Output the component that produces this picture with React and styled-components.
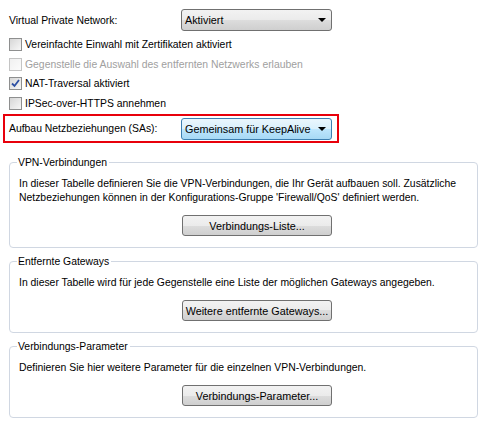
import React from "react";
import styled, { createGlobalStyle } from "styled-components";

const Global = createGlobalStyle`
  html, body { margin: 0; padding: 0; background: #fff; }
  body { font-family: "Liberation Sans", Arial, sans-serif; font-size: 10.4px; color: #000; }
`;

const Page = styled.div`
  width: 488px;
  height: 430px;
  box-sizing: border-box;
  padding: 9px 10px 0 9px;
  display: flex;
  flex-direction: column;
`;

const FieldRow = styled.div`
  display: flex;
  align-items: center;
  height: 22px;
`;

const Label = styled.span`
  width: 172px;
  flex: none;
`;

const Select = styled.div`
  width: 151px;
  height: 22px;
  box-sizing: border-box;
  border: 1px solid ${(p) => (p.$active ? "#3c7fb1" : "#707070")};
  border-radius: 3px;
  background: ${(p) =>
    p.$active
      ? "linear-gradient(#eaf6fd 0%, #d9f0fc 50%, #bee6fd 50%, #a7d9f5 100%)"
      : "linear-gradient(#f2f2f2 0%, #ebebeb 50%, #dddddd 50%, #cfcfcf 100%)"};
  display: flex;
  align-items: center;
  justify-content: space-between;
  padding: 0 5px 0 3px;
  font-size: 10.8px;
`;

const Arrow = styled.span`
  width: 0;
  height: 0;
  border-left: 4px solid transparent;
  border-right: 4px solid transparent;
  border-top: 4px solid #000;
`;

const Checks = styled.div`
  display: flex;
  flex-direction: column;
  margin-top: 4px;
`;

const CheckRow = styled.div`
  display: flex;
  align-items: center;
  height: 19.5px;
  gap: 3px;
  color: ${(p) => (p.$disabled ? "#a0a0a0" : "#000")};
`;

const Box = styled.span`
  width: 13px;
  height: 13px;
  box-sizing: border-box;
  border: 1px solid ${(p) => (p.$disabled ? "#c4c4c4" : "#8e8f8f")};
  background: ${(p) =>
    p.$disabled
      ? "linear-gradient(135deg, #f0f0f0, #fbfbfb)"
      : "linear-gradient(135deg, #d6d6d6, #f7f7f7)"};
  display: flex;
  align-items: center;
  justify-content: center;
  flex: none;
`;

const Highlight = styled.div`
  margin: 1px 0 0 -6px;
  width: 336px;
  height: 29px;
  box-sizing: border-box;
  border: 2px solid #e8000b;
  display: flex;
  align-items: center;
  padding-left: 4px;
`;

const Groups = styled.div`
  display: flex;
  flex-direction: column;
  gap: 7px;
  margin-top: 13px;
`;

const Group = styled.fieldset`
  margin: 0;
  border: 1px solid #d0d7e2;
  border-radius: 4px;
  padding: 8px 9px 11px 9px;
  display: flex;
  flex-direction: column;
  align-items: stretch;
`;

const Legend = styled.legend`
  padding: 0 2px 0 1px;
  margin-left: -2px;
  line-height: 13px;
`;

const Text = styled.p`
  margin: 0;
  line-height: 14px;
`;

const Button = styled.button`
  align-self: flex-start;
  margin: 10px 0 0 163px;
  width: 150px;
  height: 21px;
  box-sizing: border-box;
  border: 1px solid #707070;
  border-radius: 3px;
  background: linear-gradient(#f2f2f2 0%, #ebebeb 50%, #dddddd 50%, #cfcfcf 100%);
  font: inherit;
  font-size: 10.8px;
  color: #000;
  padding: 0;
`;

const Check = () => (
  <svg width="9" height="9" viewBox="0 0 9 9">
    <path d="M1 4.5 L3.5 7 L8 1" fill="none" stroke="#2c4fa3" strokeWidth="1.8" />
  </svg>
);

const checks = [
  { t: "Vereinfachte Einwahl mit Zertifikaten aktiviert" },
  { t: "Gegenstelle die Auswahl des entfernten Netzwerks erlauben", d: true },
  { t: "NAT-Traversal aktiviert", c: true },
  { t: "IPSec-over-HTTPS annehmen" },
];

const groups = [
  {
    title: "VPN-Verbindungen",
    text: "In dieser Tabelle definieren Sie die VPN-Verbindungen, die Ihr Gerät aufbauen soll. Zusätzliche Netzbeziehungen können in der Konfigurations-Gruppe 'Firewall/QoS' definiert werden.",
    btn: "Verbindungs-Liste...",
  },
  {
    title: "Entfernte Gateways",
    text: "In dieser Tabelle wird für jede Gegenstelle eine Liste der möglichen Gateways angegeben.",
    btn: "Weitere entfernte Gateways...",
  },
  {
    title: "Verbindungs-Parameter",
    text: "Definieren Sie hier weitere Parameter für die einzelnen VPN-Verbindungen.",
    btn: "Verbindungs-Parameter...",
  },
];

export default function App() {
  return (
    <>
      <Global />
      <Page>
        <FieldRow>
          <Label>Virtual Private Network:</Label>
          <Select>
            <span>Aktiviert</span>
            <Arrow />
          </Select>
        </FieldRow>
        <Checks>
          {checks.map((c) => (
            <CheckRow key={c.t} $disabled={c.d}>
              <Box $disabled={c.d}>{c.c && <Check />}</Box>
              <span>{c.t}</span>
            </CheckRow>
          ))}
        </Checks>
        <Highlight>
          <Label>Aufbau Netzbeziehungen (SAs):</Label>
          <Select $active>
            <span>Gemeinsam für KeepAlive</span>
            <Arrow />
          </Select>
        </Highlight>
        <Groups>
          {groups.map((g) => (
            <Group key={g.title}>
              <Legend>{g.title}</Legend>
              <Text>{g.text}</Text>
              <Button>{g.btn}</Button>
            </Group>
          ))}
        </Groups>
      </Page>
    </>
  );
}
